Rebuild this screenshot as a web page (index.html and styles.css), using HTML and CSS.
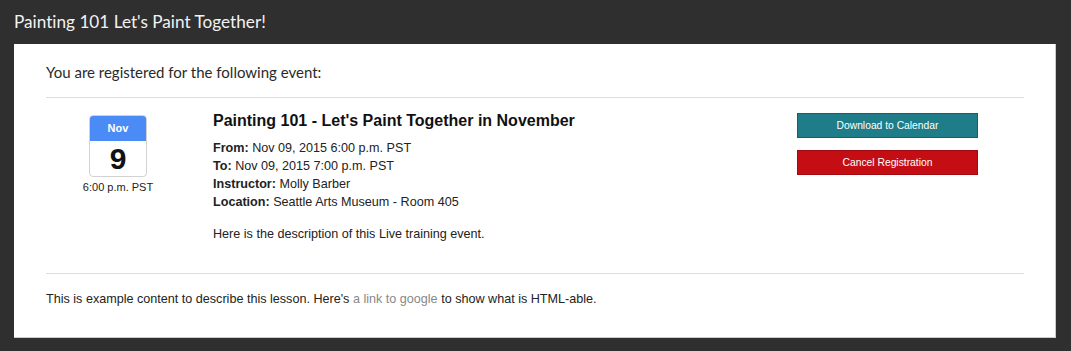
FILE: index.html
```html
<!DOCTYPE html>
<html lang="en">
<head>
    <meta charset="UTF-8">
    <meta name="viewport" content="width=device-width, initial-scale=1.0">
    <title>Painting 101 Let's Paint Together!</title>
    <link rel="stylesheet" href="styles.css">
</head>
<body>
    <h1 class="page-title">Painting 101 Let's Paint Together!</h1>
    <div class="panel">
        <p class="intro">You are registered for the following event:</p>
        <hr>
        <div class="event">
            <div class="date-col">
                <div class="calendar">
                    <div class="cal-month">Nov</div>
                    <div class="cal-day">9</div>
                </div>
                <div class="cal-time">6:00 p.m. PST</div>
            </div>
            <div class="details">
                <h2>Painting 101 - Let's Paint Together in November</h2>
                <div class="info"><b>From:</b> Nov 09, 2015 6:00 p.m. PST</div>
                <div class="info"><b>To:</b> Nov 09, 2015 7:00 p.m. PST</div>
                <div class="info"><b>Instructor:</b> Molly Barber</div>
                <div class="info"><b>Location:</b> Seattle Arts Museum - Room 405</div>
                <p class="desc">Here is the description of this Live training event.</p>
            </div>
            <div class="actions">
                <button class="btn btn-teal">Download to Calendar</button>
                <button class="btn btn-red">Cancel Registration</button>
            </div>
        </div>
        <hr>
        <p class="footer-text">This is example content to describe this lesson. Here's <a href="#">a link to google</a> to show what is HTML-able.</p>
    </div>
</body>
</html>
```

FILE: styles.css
```css
body {
    margin: 0;
    padding: 0;
    background-color: #2f2f2f;
    font-family: "Liberation Sans", Arial, sans-serif;
    color: #222;
}
.page-title {
    margin: 0;
    padding: 0 14px;
    height: 44px;
    line-height: 44px;
    font-family: Lato, sans-serif;
    font-weight: normal;
    font-size: 17.2px;
    font-variant-ligatures: none;
    color: #f2f2f2;
}
.panel {
    margin: 0 15px 0 14px;
    height: 294px;
    box-sizing: border-box;
    padding: 18px 31px 0 32px;
    background: #fff;
    border-right: 1px solid #ccc;
    border-bottom: 1px solid #ccc;
}
.intro {
    margin: 0;
    font-family: Lato, sans-serif;
    font-size: 15px;
    line-height: 20px;
    font-variant-ligatures: none;
    color: #2a2a2a;
}
hr {
    border: none;
    border-top: 1px solid #ddd;
    margin: 15px 0 0 0;
}
.event {
    display: flex;
    padding-top: 17px;
    height: 160px;
    box-sizing: border-box;
}
.date-col {
    width: 144px;
    display: flex;
    flex-direction: column;
    align-items: center;
}
.calendar {
    width: 58px;
    height: 62px;
    box-sizing: border-box;
    border: 1px solid #d2d2d2;
    border-radius: 4px;
    overflow: hidden;
}
.cal-month {
    height: 25px;
    line-height: 25px;
    background: #4b8bf5;
    color: #fff;
    font-weight: bold;
    font-size: 11px;
    text-align: center;
}
.cal-day {
    height: 35px;
    line-height: 36px;
    font-weight: bold;
    font-size: 30px;
    text-align: center;
    color: #111;
}
.cal-time {
    margin-top: 4px;
    font-size: 11px;
    color: #222;
}
.details {
    flex: 1;
    padding-left: 23px;
}
.details h2 {
    margin: -4px 0 8px 0;
    font-size: 16px;
    line-height: 20px;
    color: #111;
}
.info {
    font-size: 12.6px;
    line-height: 18px;
    color: #222;
}
.desc {
    margin: 15px 0 0 0;
    font-size: 12.6px;
    line-height: 17px;
}
.actions {
    width: 227px;
    display: flex;
    flex-direction: column;
    gap: 12px;
    margin-top: -2px;
}
.btn {
    width: 181px;
    height: 25px;
    font-family: "Liberation Sans", Arial, sans-serif;
    font-size: 10.3px;
    color: #fff;
    border-radius: 0;
    cursor: pointer;
}
.btn-teal {
    background-color: #1e7d88;
    border: 1px solid #13606a;
}
.btn-red {
    background-color: #c50d14;
    border: 1px solid #a00a10;
}
.footer-text {
    margin: 17px 0 0 0;
    font-size: 12.6px;
    line-height: 17px;
    color: #222;
}
.footer-text a {
    color: #888;
    text-decoration: none;
}
```
